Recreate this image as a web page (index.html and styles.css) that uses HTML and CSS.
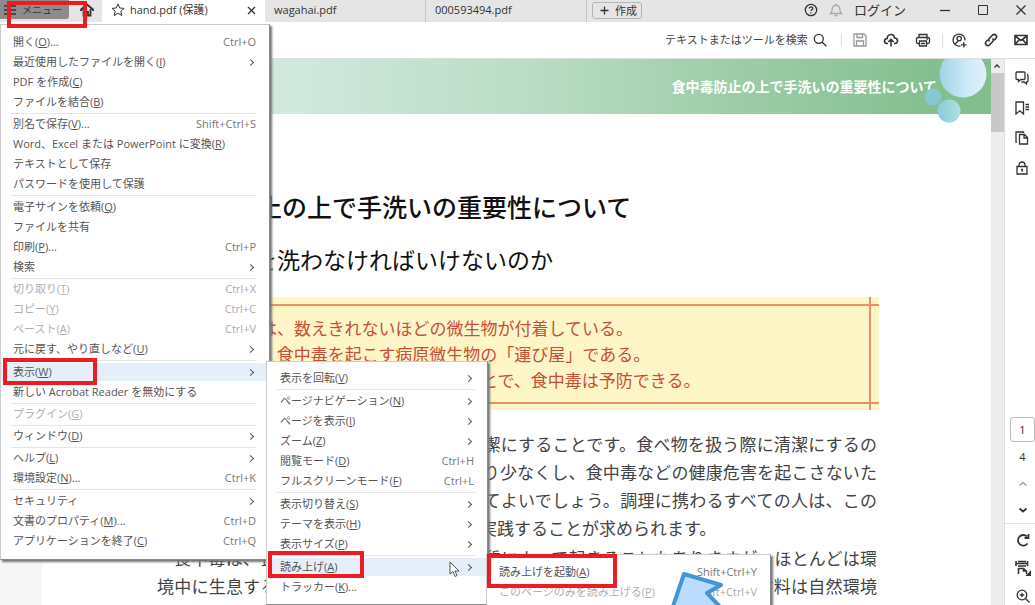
FILE: index.html
```html
<!DOCTYPE html>
<html lang="ja">
<head>
<meta charset="utf-8">
<title>hand.pdf (保護)</title>
<link rel="stylesheet" href="styles.css">
</head>
<body>
<header class="titlebar">
  <button class="menu-button"><svg class="icon" width="12" height="12" viewBox="0 0 12 12"><path d="M0 2h12M0 6h12M0 10h12"/></svg>メニュー</button>
  <button class="home-button" aria-label="ホーム"><svg class="icon heavy" width="14" height="14" viewBox="0 0 14 14"><path d="M1 8V6.500l6-5 6 5V8M3.500 6v6.500H6V9h2v3.500h2.500V6"/></svg></button>
  <div class="tab tab-active">
    <svg class="icon thin" width="14" height="14" viewBox="0 0 14 14"><path d="M7 1l1.800 4 4.200.4-3.200 2.800 1 4.300L7 10.300l-3.800 2.200 1-4.300L1 5.400l4.200-.4z"/></svg>
    <button class="tab-name">hand.pdf (保護)</button>
    <button class="tab-close" aria-label="タブを閉じる"><svg class="icon" width="9" height="9" viewBox="0 0 9 9"><path d="M1 1l7 7M8 1L1 8"/></svg></button>
  </div>
  <div class="tab"><button class="tab-name">wagahai.pdf</button></div>
  <div class="tab"><button class="tab-name">000593494.pdf</button></div>
  <button class="create-button"><svg class="icon" width="9" height="9" viewBox="0 0 9 9"><path d="M4.500 0.500v8M.5 4.500h8"/></svg>作成</button>
  <div class="window-tools">
    <button aria-label="ヘルプ"><svg class="icon" width="14" height="14" viewBox="0 0 14 14"><circle cx="7" cy="7" r="5.700"/><path d="M5.300 5.600c0-2.200 3.500-2.200 3.500 0 0 1.200-1.800 1.200-1.800 2.400M7 9.200v1.300"/></svg></button>
    <button class="bell" aria-label="通知"><svg class="icon" width="14" height="14" viewBox="0 0 14 14"><path d="M1.500 10.500h11c-1.600-1.500-1.700-2.500-1.700-4.500 0-5-7.600-5-7.600 0 0 2-.1 3-1.700 4.500zM5.500 12.500h3M7 .8v1.400"/></svg></button>
    <button class="login">ログイン</button>
    <button class="win" aria-label="最小化"><svg class="icon" width="12" height="12" viewBox="0 0 12 12"><path d="M1 6.500h10"/></svg></button>
    <button class="win" aria-label="最大化"><svg class="icon thin" width="12" height="12" viewBox="0 0 12 12"><path d="M1.500 1.500h9v9h-9z"/></svg></button>
    <button class="win" aria-label="閉じる"><svg class="icon" width="12" height="12" viewBox="0 0 12 12"><path d="M1.500 1.500l9 9M10.500 1.500l-9 9"/></svg></button>
  </div>
</header>

<div class="toolbar">
  <label class="search"><input type="text" placeholder="テキストまたはツールを検索" aria-label="検索"><svg class="icon" width="14" height="14" viewBox="0 0 14 14"><circle cx="5.800" cy="5.800" r="4.500"/><path d="M9 9l4.300 4.300"/></svg></label>
  <div class="tool-group">
    <button class="dim" aria-label="保存"><svg class="icon" width="14" height="14" viewBox="0 0 14 14"><path d="M1 1h10l2 2v10H1zM4 1v3.500h5.500V1M3.500 13V8h7v5"/></svg></button>
    <button aria-label="アップロード"><svg class="icon bold" width="16" height="14" viewBox="0 0 16 14"><path d="M5 10.500H4c-3.800-.5-3-5 .2-5C4.500.5 11 .2 11.500 5c4 .2 4 5.300.3 5.500H11M8 13.500V6.500M5.300 9L8 6.300 10.700 9"/></svg></button>
    <button aria-label="印刷"><svg class="icon" width="16" height="14" viewBox="0 0 16 14"><path d="M4 4V1.500h8V4M4 10.500H3c-1 0-1.500-.5-1.500-1.500V6c0-1 .5-1.500 1.500-1.500h10c1 0 1.500.5 1.500 1.500v3c0 1-.5 1.500-1.500 1.500h-1M4.500 8h7v5h-7zM6 10.500h4M11.500 6.200h1.500"/></svg></button>
  </div>
  <div class="tool-group">
    <button aria-label="ユーザーを追加"><svg class="icon" width="16" height="15" viewBox="0 0 16 15"><path d="M8.500 12.900A6 6 0 1 1 13 7.500M3.500 11c.5-1.600 1.700-2.300 3-2.600M11.800 9v5.500M9 11.800h5.500"/><circle cx="7.200" cy="5.500" r="2.200"/></svg></button>
    <button aria-label="リンク"><svg class="icon bold" width="14" height="14" viewBox="0 0 14 14"><path d="M5.500 8.500c-1.200-1.200-1-2.300 0-3.300l2.800-3c2.300-2.200 5.700.9 3.500 3.300l-1.500 1.600M8.500 5.500c1.200 1.200 1 2.300 0 3.300l-2.800 3c-2.300 2.200-5.700-.9-3.500-3.300l1.500-1.600"/></svg></button>
    <button aria-label="メール"><svg class="icon bold" width="14" height="12" viewBox="0 0 14 12"><path d="M1 1.500h12v9H1zM1 2l6 4.500L13 2M1 10.500l4-4.500M13 10.500L9 6"/></svg></button>
  </div>
</div>

<div class="workspace">
  <main class="viewer">
    <article class="page">
      <div class="banner">食中毒防止の上で手洗いの重要性について
        <svg class="bubbles" width="66" height="66" viewBox="0 0 66 66">
          <defs>
            <linearGradient id="b1" x1="0" x2="1"><stop offset="0" stop-color="#9fd3e4"/><stop offset=".6" stop-color="#cdeaf8"/><stop offset="1" stop-color="#dff0fb"/></linearGradient>
            <linearGradient id="b2" x1="0" x2="1"><stop offset="0" stop-color="#8acbd9"/><stop offset="1" stop-color="#afe0e0"/></linearGradient>
          </defs>
          <circle cx="39" cy="15" r="23.500" fill="url(#b1)"/><circle cx="9" cy="38" r="8.500" fill="#86c7d4"/><circle cx="25" cy="52" r="11.500" fill="url(#b2)"/>
        </svg>
      </div>
      <div class="content">
        <h1>食中毒防止の上で手洗いの重要性について</h1>
        <h2>なぜ手を洗わなければいけないのか</h2>
        <div class="callout">
          <p>手には、数えきれないほどの微生物が付着している。</p>
          <p>手が、食中毒を起こす病原微生物の「運び屋」である。</p>
          <p>適切に手を洗うことを心がけることで、食中毒は予防できる。</p>
        </div>
        <p class="body-text">手を洗う目的は、食品を扱う人の手を清潔にすることです。食べ物を扱う際に清潔にするのは、手や指に付着した微生物を可能なかぎり少なくし、食中毒などの健康危害を起こさないために行うもので、基本的な衛生管理といってよいでしょう。調理に携わるすべての人は、このことを十分に理解し、正しい手洗い方法を実践することが求められます。</p>
        <p class="body-text">食中毒は、食品に含まれる有害な化学物質によって起きることもありますが、ほとんどは環境中に生息する微生物が食品に付着し、増えることによって発生します。主な材料は自然環境</p>
      </div>
    </article>
  </main>
  <div class="scrollbar"><svg class="icon" width="12" height="14" viewBox="0 0 12 14"><path d="M3.500 8.500L6 6l2.500 2.500"/></svg><div class="thumb"></div></div>
  <aside class="rail">
    <div class="rail-top">
      <button aria-label="コメント"><svg class="icon" width="14" height="14" viewBox="0 0 14 14"><path d="M2 1h7q1 0 1 1v5.500q0 1-1 1H6L3.500 10.500v-2H2q-1 0-1-1V2q0-1 1-1zM12 3.500q1 0 1 1V10q0 1-1 1h-.5v2L9 11H6.500"/></svg></button>
      <button aria-label="しおり"><svg class="icon" width="14" height="14" viewBox="0 0 14 14"><path d="M1 1h7.500v12L4.800 9.800 1 13zM10.500 3.500H14M10.500 6H14M10.500 8.500H14"/></svg></button>
      <button aria-label="ページ"><svg class="icon" width="14" height="14" viewBox="0 0 14 14"><path d="M4.500 3.500h5l3 3v6.500h-8zM9 3.500V7h3.500M2 11H1V1h7.500v1"/></svg></button>
      <button aria-label="保護"><svg class="icon" width="14" height="14" viewBox="0 0 14 14"><path d="M2 5.500h10V13H2zM4 5.500V4c0-4 6-4 6 0v1.500M7 8v2.800M6 8.500h2"/></svg></button>
    </div>
    <div class="rail-pages">
      <input class="page-number" type="text" value="1" aria-label="ページ番号">
      <span class="page-total">4</span>
      <button class="dim" aria-label="前のページ"><svg class="icon" width="10" height="10" viewBox="0 0 10 10"><path d="M1.500 6.500L5 3.500l3.500 3"/></svg></button>
      <button aria-label="次のページ"><svg class="icon heavy" width="10" height="10" viewBox="0 0 10 10"><path d="M1.500 3.500L5 6.500l3.500-3"/></svg></button>
    </div>
    <div class="rail-view">
      <button aria-label="回転"><svg class="icon heavy" width="14" height="14" viewBox="0 0 14 14"><path d="M11.500 10.500A5.300 5.300 0 1 1 11 3.500M12.500 1v4h-4"/></svg></button>
      <button aria-label="幅に合わせる"><svg class="icon bold" width="16" height="16" viewBox="0 0 16 16"><path d="M1 1v5M12.500 1v5M1 3.500h11.500M3 1.500h8M3 6h8M3.500 8v6M3.500 8.500h5l3 2.500v3M8.500 8.500V11h3"/><path fill="currentColor" d="M15.500 12v3.500H12z"/></svg></button>
      <button aria-label="ズームイン"><svg class="icon" width="14" height="14" viewBox="0 0 14 14"><circle cx="6" cy="6" r="4.800"/><path d="M9.500 9.500l4 4M6 3.800v4.400M3.800 6h4.400"/></svg></button>
    </div>
  </aside>
</div>

<ul class="menu menu-main">
  <li><button>開く(<u>O</u>)...<kbd>Ctrl+O</kbd></button></li>
  <li><button class="sub">最近使用したファイルを開く(<u>I</u>)</button></li>
  <li><button>PDF を作成(<u>C</u>)</button></li>
  <li><button>ファイルを結合(<u>B</u>)</button></li>
  <li class="rule"></li>
  <li><button>別名で保存(<u>V</u>)...<kbd>Shift+Ctrl+S</kbd></button></li>
  <li><button>Word、Excel または PowerPoint に変換(<u>R</u>)</button></li>
  <li><button>テキストとして保存</button></li>
  <li><button>パスワードを使用して保護</button></li>
  <li class="rule"></li>
  <li><button>電子サインを依頼(<u>Q</u>)</button></li>
  <li><button>ファイルを共有</button></li>
  <li><button>印刷(<u>P</u>)...<kbd>Ctrl+P</kbd></button></li>
  <li><button class="sub">検索</button></li>
  <li class="rule"></li>
  <li><button disabled>切り取り(<u>T</u>)<kbd>Ctrl+X</kbd></button></li>
  <li><button disabled>コピー(<u>Y</u>)<kbd>Ctrl+C</kbd></button></li>
  <li><button disabled>ペースト(<u>A</u>)<kbd>Ctrl+V</kbd></button></li>
  <li><button class="sub">元に戻す、やり直しなど(<u>U</u>)</button></li>
  <li class="rule"></li>
  <li><button class="sub current">表示(<u>W</u>)</button></li>
  <li><button>新しい Acrobat Reader を無効にする</button></li>
  <li class="rule"></li>
  <li><button disabled>プラグイン(<u>G</u>)</button></li>
  <li class="rule"></li>
  <li><button class="sub">ウィンドウ(<u>D</u>)</button></li>
  <li class="rule"></li>
  <li><button class="sub">ヘルプ(<u>L</u>)</button></li>
  <li><button>環境設定(<u>N</u>)...<kbd>Ctrl+K</kbd></button></li>
  <li class="rule"></li>
  <li><button class="sub">セキュリティ</button></li>
  <li><button>文書のプロパティ(<u>M</u>)...<kbd>Ctrl+D</kbd></button></li>
  <li><button>アプリケーションを終了(<u>C</u>)<kbd>Ctrl+Q</kbd></button></li>
</ul>

<ul class="menu menu-view">
  <li><button class="sub">表示を回転(<u>V</u>)</button></li>
  <li class="rule"></li>
  <li><button class="sub">ページナビゲーション(<u>N</u>)</button></li>
  <li><button class="sub">ページを表示(<u>I</u>)</button></li>
  <li><button class="sub">ズーム(<u>Z</u>)</button></li>
  <li><button>閲覧モード(<u>D</u>)<kbd>Ctrl+H</kbd></button></li>
  <li><button>フルスクリーンモード(<u>F</u>)<kbd>Ctrl+L</kbd></button></li>
  <li class="rule"></li>
  <li><button class="sub">表示切り替え(<u>S</u>)</button></li>
  <li><button class="sub">テーマを表示(<u>H</u>)</button></li>
  <li><button class="sub">表示サイズ(<u>P</u>)</button></li>
  <li class="rule"></li>
  <li><button class="sub current">読み上げ(<u>A</u>)</button></li>
  <li><button>トラッカー(<u>K</u>)...</button></li>
</ul>

<ul class="menu menu-read">
  <li><button>読み上げを起動(<u>A</u>)<kbd>Shift+Ctrl+Y</kbd></button></li>
  <li><button disabled>このページのみを読み上げる(<u>P</u>)<kbd>Shift+Ctrl+V</kbd></button></li>
</ul>

<svg class="cursor" width="12" height="17" viewBox="0 0 12 17"><path d="M1 1v12l3-2.500 2 5 2-1-2-4.500h4z" fill="#fff" stroke="#555"/></svg>
<svg class="arrow" width="60" height="35" viewBox="0 0 60 35"><path d="M1 42L14 4l37 11-14 8 18 19z" fill="#b9dcff" stroke="#4596d8" stroke-width="4" stroke-linejoin="round"/></svg>
<div class="mark mark-menu"></div>
<div class="mark mark-view"></div>
<div class="mark mark-speech"></div>
<div class="mark mark-start"></div>
</body>
</html>
```

FILE: styles.css
```css
* { box-sizing: border-box; }
html, body { height: 100%; }
body {
  margin: 0;
  display: flex;
  flex-direction: column;
  position: relative;
  overflow: hidden;
  background: #fff;
  color: #333;
  font: 11px/20px "Open Sans", "Noto Sans CJK JP", sans-serif;
}
button, input { font: inherit; color: inherit; border: 0; background: none; padding: 0; margin: 0; }
ul { list-style: none; margin: 0; padding: 0; }
p, h1, h2 { margin: 0; }
svg { display: block; flex: none; }
.icon { fill: none; stroke: currentColor; stroke-width: 1.3; }
.thin { stroke-width: 1; }
.bold { stroke-width: 1.6; }
.heavy { stroke-width: 1.8; }
.dim { color: #999; }

.titlebar { display: flex; align-items: stretch; height: 22px; background: #e5e5e5; flex: none; }
.titlebar button { display: flex; align-items: center; }
.menu-button { width: 69px; height: 19px; padding-left: 4px; gap: 6px; background: #8c8c8c; border-radius: 0 0 3px 0; font-size: 10px; }
.home-button { width: 33px; padding: 0 0 2px 11px; }
.tab { display: flex; align-items: center; width: 161px; padding: 0 9px 2px; border-right: 1px solid #c4c4c4; }
.tab-active { width: 163px; background: #fff; border: 0; gap: 5px; }
.tab-active .tab-name { flex: 1; }
.create-button { height: 17px; margin: 2px 0 0 5px; padding: 0 4px 0 7px; gap: 6px; border: 1px solid #b5b5b5; border-radius: 3px; }
.window-tools { display: flex; align-items: center; margin-left: auto; padding: 0 8px 3px 0; gap: 11px; }
.bell { color: #aaa; }
.login { font-size: 13px; }
.window-tools .win { margin-left: 15px; }
.window-tools .login + .win { margin-left: 22px; }

.toolbar { display: flex; align-items: center; justify-content: flex-end; height: 37px; padding-right: 7px; flex: none; border-bottom: 1px solid #ddd; }
.search { display: flex; align-items: center; gap: 3px; padding-right: 14px; }
.search input { width: 145px; }
.search input::placeholder { color: #444; opacity: 1; }
.tool-group { display: flex; align-items: center; gap: 16px; padding: 0 11px; border-left: 1px solid #ddd; }
.tool-group:last-child { padding: 0 0 0 9px; }

.workspace { display: flex; flex: 1; min-height: 0; }
.viewer { flex: 1; min-width: 0; overflow: hidden; padding-left: 42px; background: #f6f6f7; }
.page { min-height: 100%; background: #fff; color: #222; font-family: "Noto Sans CJK JP", sans-serif; }
.banner {
  position: relative;
  height: 55px;
  padding-right: 54px;
  text-align: right;
  font-size: 14px;
  font-weight: 700;
  line-height: 54px;
  color: #fff;
  background: linear-gradient(90deg, #d0e8dd 27%, #b8dcc3 53%, #9fcda9 72%, #83be8f 95%);
}
.bubbles { position: absolute; right: 1px; top: 0; }
.content { padding: 74px 114px 0 115px; }
h1 { font-size: 25px; line-height: 36px; font-weight: 500; color: #111; white-space: nowrap; }
h2 { margin-top: 18px; padding-left: 28px; font-size: 23px; line-height: 34px; font-weight: 400; color: #111; white-space: nowrap; }
.callout {
  margin: 21px -2px 20px 0;
  padding: 18px 0 17px 69px;
  font-size: 17px;
  line-height: 26px;
  color: #c64f38;
  white-space: nowrap;
  background:
    linear-gradient(#e8906a, #e8906a) 0 7px / 100% 2px no-repeat,
    linear-gradient(#e8906a, #e8906a) 0 105px / 100% 2px no-repeat,
    linear-gradient(#e8906a, #e8906a) right 8px top 0 / 2px 100% no-repeat,
    #fff6c8;
}
.body-text { margin-bottom: 2px; font-size: 17px; line-height: 28px; text-indent: 17px; text-align: justify; color: #444; }
.body-text:last-child { text-align-last: justify; }

.scrollbar { width: 13px; background: #eceeee; flex: none; }
.thumb { height: 59px; background: #c8c8c8; }
.rail { display: flex; flex-direction: column; width: 31px; flex: none; border-left: 1px solid #ddd; color: #333; }
.rail button { display: flex; }
.rail-top { display: flex; flex-direction: column; align-items: center; gap: 16px; padding: 12px 0 0 4px; }
.rail-pages { display: flex; flex-direction: column; align-items: center; margin-top: auto; padding: 0 0 8px 5px; border-bottom: 1px solid #e4e4e4; }
.page-number { width: 25px; height: 25px; border: 1px solid #bbb; border-radius: 3px; text-align: center; }
.page-total { margin: 5px 0 12px; }
.rail-pages button + button { margin-top: 16px; }
.rail-view { display: flex; flex-direction: column; align-items: center; gap: 13px; padding: 9px 0 2px 5px; }

.menu { position: absolute; background: #fff; border: 1px solid #ccc; border-color: #ccc #888 #888 #ccc; box-shadow: 2px 2px 2px #777; color: #555; }
.menu button { display: flex; align-items: center; width: 100%; height: 20px; text-align: left; white-space: pre; }
.menu button:disabled { color: #b0b0b0; }
.menu kbd { margin-left: auto; font: inherit; color: #777; }
.menu button:disabled kbd { color: #aaa; }
.menu .current { background: linear-gradient(#e5eff9, #e5eff9) 0 1px / 100% 18px no-repeat; }
.sub::after { content: ""; width: 4px; height: 4px; margin: 0 3px 0 auto; border: solid #555; border-width: 1px 1px 0 0; transform: rotate(45deg); }
.rule { height: 3px; padding: 1px 0; margin: 0 12px 0 10px; background: #e6e6e6 content-box; }
.menu-main { left: 0; top: 24px; width: 270px; padding: 7px 0 8px; }
.menu-main .rule:nth-child(odd) { height: 2px; padding-bottom: 0; }
.menu-main button { padding: 0 13px 0 12px; }
.menu-view { left: 266px; top: 361px; width: 222px; padding: 6px 0 7px; }
.menu-view button { padding: 0 13px; }
.menu-read { left: 486px; top: 554px; width: 285px; padding: 7px 0; }
.menu-read button { padding: 0 13px 0 12px; }

.cursor { position: absolute; left: 449px; top: 561px; }
.arrow { position: absolute; left: 670px; top: 570px; }
.mark { position: absolute; border: 4px solid #ed1c24; }
.mark-menu { left: 7px; top: 1px; width: 80px; height: 27px; }
.mark-view { left: 3px; top: 358px; width: 94px; height: 27px; }
.mark-speech { left: 268px; top: 551px; width: 96px; height: 27px; }
.mark-start { left: 487px; top: 554px; width: 130px; height: 34px; }
```
